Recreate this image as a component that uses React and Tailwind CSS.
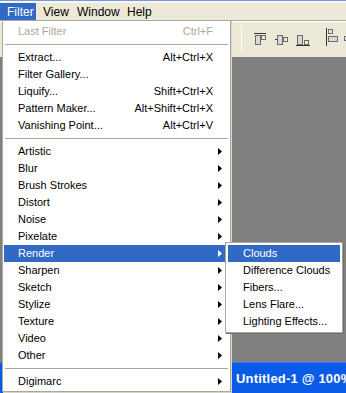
import React from "react";

const group1 = [
  ["Extract...", "Alt+Ctrl+X"],
  ["Filter Gallery...", ""],
  ["Liquify...", "Shift+Ctrl+X"],
  ["Pattern Maker...", "Alt+Shift+Ctrl+X"],
  ["Vanishing Point...", "Alt+Ctrl+V"],
];

const group2 = [
  "Artistic", "Blur", "Brush Strokes", "Distort", "Noise", "Pixelate", "Render",
  "Sharpen", "Sketch", "Stylize", "Texture", "Video", "Other",
];

const renderItems = ["Clouds", "Difference Clouds", "Fibers...", "Lens Flare...", "Lighting Effects..."];

function Arrow({ white }) {
  return (
    <svg width="4" height="7" viewBox="0 0 4 7" className="absolute right-[7px] top-[5px]">
      <path d="M0 0 L4 3.5 L0 7 Z" fill={white ? "#ffffff" : "#000000"} />
    </svg>
  );
}

function Sep() {
  return (
    <div className="h-[9px] flex items-center px-[1px]">
      <div className="w-full h-[2px] border-t border-[#aca899] border-b border-b-white" />
    </div>
  );
}

function Row({ label, shortcut, arrow, active, disabled }) {
  return (
    <div
      className={
        "relative h-[17px] flex items-center pl-[14px] pr-[16px] " +
        (active ? "bg-[#316ac5] text-white" : disabled ? "text-[#aca899]" : "text-black")
      }
    >
      <span className="flex-1">{label}</span>
      {shortcut && <span>{shortcut}</span>}
      {arrow && <Arrow white={active} />}
    </div>
  );
}

function ToolIcon({ children }) {
  return (
    <svg width="20" height="14" viewBox="0 0 20 14" className="shrink-0">
      {children}
    </svg>
  );
}

export default function App() {
  return (
    <div
      className="relative w-[346px] h-[393px] overflow-hidden bg-[#ece9d8] text-[11px] leading-none"
      style={{ fontFamily: '"Liberation Sans", Arial, sans-serif' }}
    >
      {/* window top edge */}
      <div className="h-[1px] bg-[#7a96df]" />
      <div className="h-[2px] bg-[#f6f5ee]" />

      {/* menu bar */}
      <div className="h-[17px] flex items-center text-[12px]">
        <div className="h-full w-[36px] bg-[#316ac5] text-white flex items-center pl-[7px]">Filter</div>
        <div className="pl-[7px] w-[34px]">View</div>
        <div className="pl-[7px] w-[50px]">Window</div>
        <div className="pl-[7px]">Help</div>
      </div>

      {/* toolbar + workspace on the right */}
      <div className="flex flex-col h-[373px]">
        <div className="h-[1px] bg-[#aca899]" />
        <div className="h-[1px] bg-white" />
        <div className="h-[35px] flex items-start pl-[231px] pt-[4px]">
          <div className="w-[2px] h-[8px] mt-[12px] mr-[10px] flex flex-col justify-between">
            <div className="h-[2px] bg-[#555]" />
            <div className="h-[2px] bg-[#555]" />
          </div>
          <div className="w-[1px] h-[25px] bg-[#aca899] border-r border-white mr-[12px]" />
          <div className="flex gap-[1px] pt-[7px]">
            <ToolIcon>
              <path d="M0 0.5 H12" stroke="#333" />
              <rect x="1.5" y="2.5" width="5" height="9" fill="#d8d8d8" stroke="#6b6b6b" />
              <rect x="7.5" y="2.5" width="4" height="4" fill="#e8e8e8" stroke="#6b6b6b" />
            </ToolIcon>
            <ToolIcon>
              <path d="M0 6.5 H13" stroke="#333" />
              <rect x="2.5" y="2.5" width="5" height="9" fill="#d8d8d8" stroke="#6b6b6b" />
              <rect x="8.5" y="4.5" width="4" height="4" fill="#e8e8e8" stroke="#6b6b6b" />
            </ToolIcon>
            <ToolIcon>
              <path d="M0 12.5 H14" stroke="#333" />
              <rect x="1.5" y="2.5" width="5" height="9" fill="#d8d8d8" stroke="#6b6b6b" />
              <rect x="8.5" y="7.5" width="4" height="4" fill="#e8e8e8" stroke="#6b6b6b" />
            </ToolIcon>
          </div>
          <div className="pt-[2px] ml-[10px]">
            <svg width="20" height="20" viewBox="0 0 20 20">
              <path d="M0.5 0 V18" stroke="#333" />
              <rect x="2.5" y="1.5" width="4" height="4" fill="#e8e8e8" stroke="#6b6b6b" />
              <rect x="2.5" y="8.5" width="9" height="5" fill="#d8d8d8" stroke="#6b6b6b" />
              <rect x="18.5" y="8.5" width="4" height="4" fill="#e8e8e8" stroke="#6b6b6b" />
            </svg>
          </div>
        </div>
        <div className="flex-1 bg-[#808080]" />
        <div className="h-[31px] bg-[#0a5ce8] flex items-center pl-[236px] border-t border-[#3b7df5]">
          <span className="text-white font-bold text-[13px] tracking-[0.2px] whitespace-nowrap">
            Untitled-1 @ 100%
          </span>
        </div>
      </div>

      {/* Filter menu */}
      <div className="absolute left-[2px] top-[20px] w-[229px] bg-white border border-[#aca899] p-[1px] pt-[2px] shadow-[1px_1px_0_#d6d3c8]">
        <Row label="Last Filter" shortcut="Ctrl+F" disabled />
        <Sep />
        {group1.map(([l, s]) => (
          <Row key={l} label={l} shortcut={s} />
        ))}
        <Sep />
        {group2.map((l) => (
          <Row key={l} label={l} arrow active={l === "Render"} />
        ))}
        <Sep />
        <Row label="Digimarc" arrow />
      </div>

      {/* Render submenu */}
      <div className="absolute left-[225px] top-[242px] w-[118px] bg-white border border-[#aca899] p-[2px] shadow-[1px_1px_0_#6e6e6e]">
        {renderItems.map((l, i) => (
          <div
            key={l}
            className={
              "h-[17px] flex items-center pl-[15px] whitespace-nowrap " +
              (i === 0 ? "bg-[#316ac5] text-white" : "text-black")
            }
          >
            {l}
          </div>
        ))}
      </div>
    </div>
  );
}
